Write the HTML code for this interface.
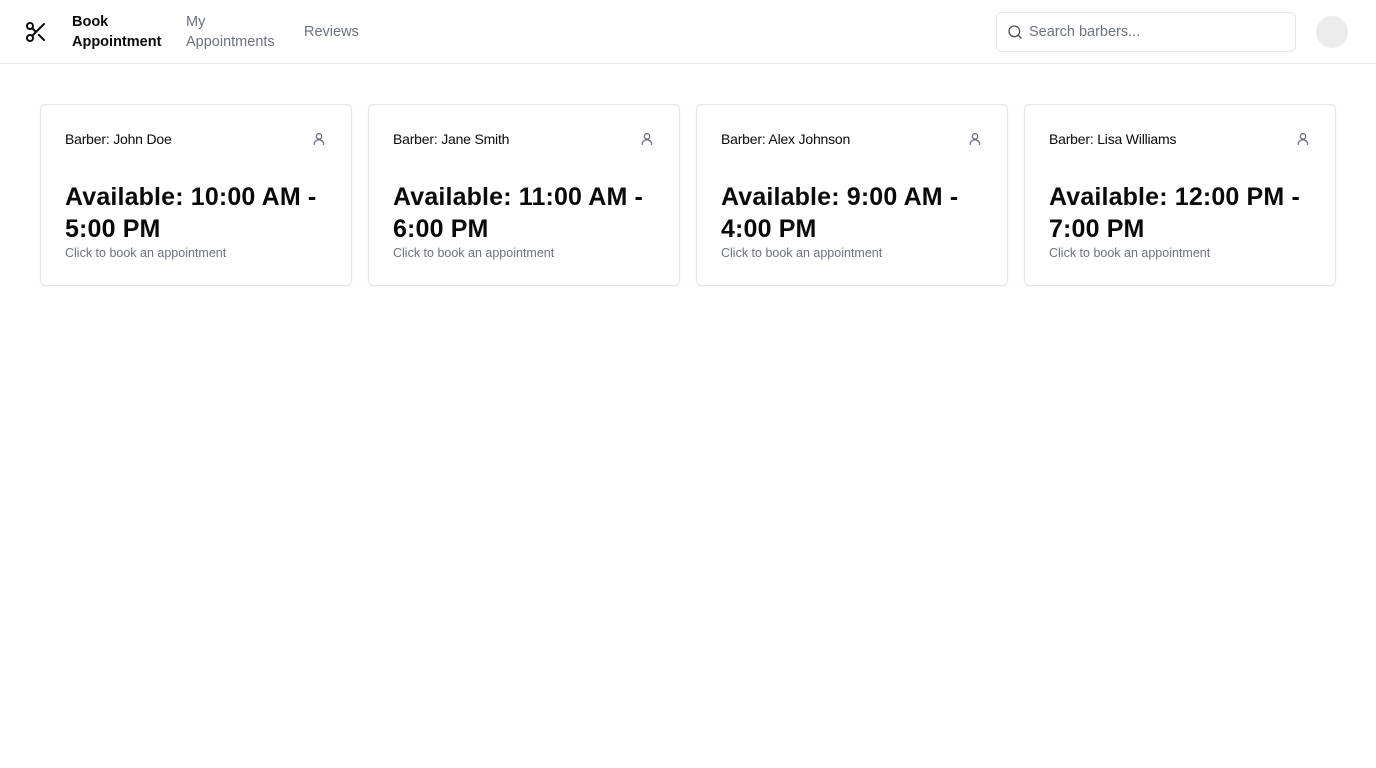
<!DOCTYPE html>
<html><head><style>
*{box-sizing:border-box;margin:0;padding:0}
body{width:1376px;height:768px;background:#fff;font-family:"Liberation Sans",sans-serif;color:#0a0a0a;position:relative;overflow:hidden}
.hdr{position:absolute;left:0;top:0;width:1376px;height:64px;border-bottom:1px solid #e5e5e5}
.nav{position:absolute;font-size:14.5px;line-height:20px}
.search{position:absolute;left:996px;top:12px;width:300px;height:40px;border:1px solid #e5e5e5;border-radius:6px}
.search span{position:absolute;left:32px;top:11px;font-size:14.5px;color:#6b7280}
.av{position:absolute;left:1316px;top:16px;width:32px;height:32px;border-radius:50%;background:#ebebeb}
.card{position:absolute;top:104px;width:312px;height:182px;border:1px solid #e5e5e5;border-radius:6px;box-shadow:0 1px 2px rgba(0,0,0,.05)}
.card .t{position:absolute;left:24px;top:24px;font-size:14px;line-height:20px;letter-spacing:-0.2px}
.card .i{position:absolute;right:24px;top:26px}
.card h2{position:absolute;left:24px;top:76px;font-size:25px;line-height:32px;font-weight:bold;white-space:nowrap;letter-spacing:0.15px}
.card .s{position:absolute;left:24px;top:140px;font-size:12.5px;line-height:16px;color:#6b7280}
</style></head><body>
<div class="hdr">
<svg style="position:absolute;left:24px;top:20px" width="24" height="24" viewBox="0 0 24 24" fill="none" stroke="#0a0a0a" stroke-width="2" stroke-linecap="round" stroke-linejoin="round"><circle cx="6" cy="6" r="3"/><path d="M8.12 8.12 12 12"/><path d="M20 4 8.12 15.88"/><circle cx="6" cy="18" r="3"/><path d="M14.8 14.8 20 20"/></svg>
<div class="nav" style="left:72px;top:12px;font-weight:bold">Book<br>Appointment</div>
<div class="nav" style="left:186px;top:12px;color:#6b7280">My<br>Appointments</div>
<div class="nav" style="left:304px;top:22px;color:#6b7280">Reviews</div>
<div class="search"><svg style="position:absolute;left:10px;top:11px" width="16" height="16" viewBox="0 0 24 24" fill="none" stroke="#525252" stroke-width="2" stroke-linecap="round"><circle cx="11" cy="11" r="8"/><path d="m21 21-4.3-4.3"/></svg><span>Search barbers...</span></div>
<div class="av"></div>
</div>
<div class="card" style="left:40px"><div class="t">Barber: John Doe</div><svg class="i" width="16" height="16" viewBox="0 0 24 24" fill="none" stroke="#6b7280" stroke-width="2"><circle cx="12" cy="8" r="4"/><path d="M5 21v-1a7 7 0 0 1 14 0v1"/></svg><h2>Available: 10:00 AM -<br>5:00 PM</h2><div class="s">Click to book an appointment</div></div>
<div class="card" style="left:368px"><div class="t">Barber: Jane Smith</div><svg class="i" width="16" height="16" viewBox="0 0 24 24" fill="none" stroke="#6b7280" stroke-width="2"><circle cx="12" cy="8" r="4"/><path d="M5 21v-1a7 7 0 0 1 14 0v1"/></svg><h2>Available: 11:00 AM -<br>6:00 PM</h2><div class="s">Click to book an appointment</div></div>
<div class="card" style="left:696px"><div class="t">Barber: Alex Johnson</div><svg class="i" width="16" height="16" viewBox="0 0 24 24" fill="none" stroke="#6b7280" stroke-width="2"><circle cx="12" cy="8" r="4"/><path d="M5 21v-1a7 7 0 0 1 14 0v1"/></svg><h2>Available: 9:00 AM -<br>4:00 PM</h2><div class="s">Click to book an appointment</div></div>
<div class="card" style="left:1024px"><div class="t">Barber: Lisa Williams</div><svg class="i" width="16" height="16" viewBox="0 0 24 24" fill="none" stroke="#6b7280" stroke-width="2"><circle cx="12" cy="8" r="4"/><path d="M5 21v-1a7 7 0 0 1 14 0v1"/></svg><h2>Available: 12:00 PM -<br>7:00 PM</h2><div class="s">Click to book an appointment</div></div>
</body></html>
